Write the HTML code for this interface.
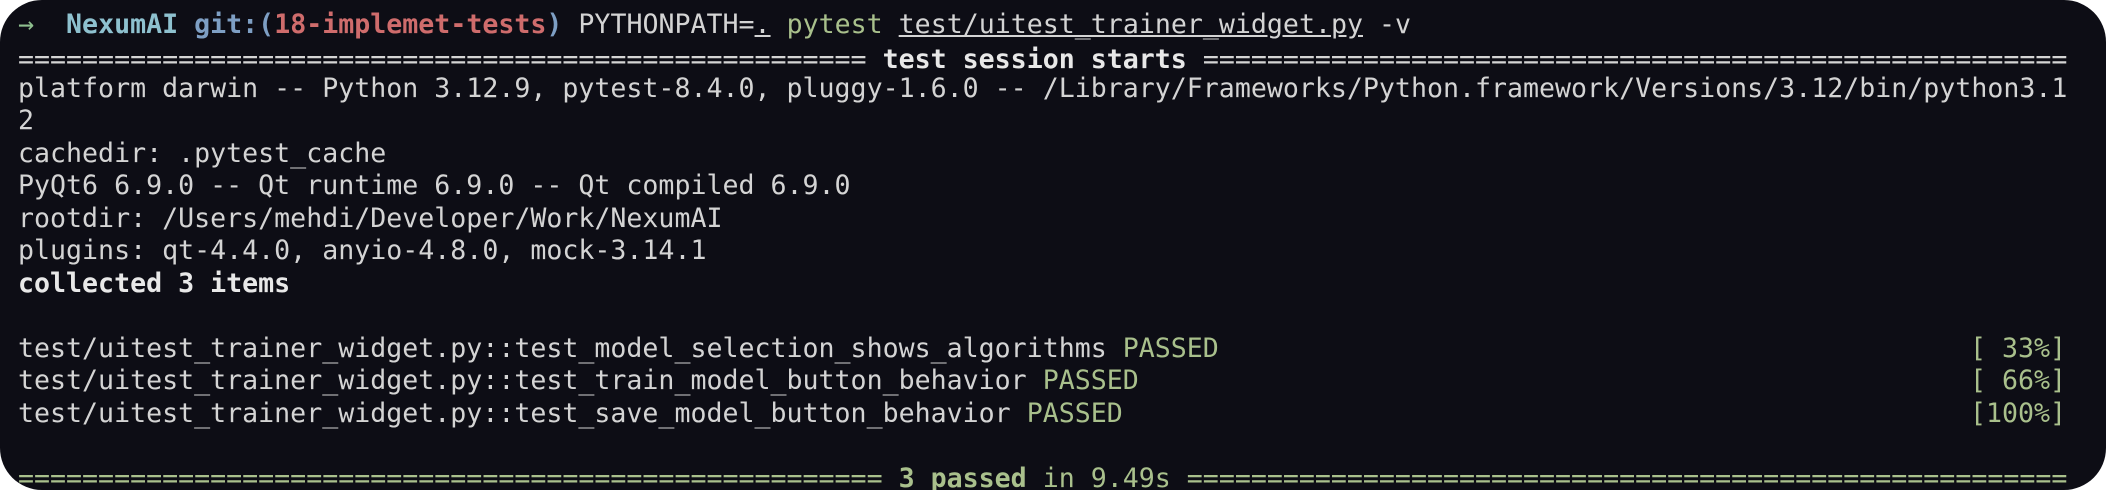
<!DOCTYPE html>
<html><head><meta charset="utf-8">
<style>
html,body{margin:0;padding:0;background:#fff;}
body{width:2106px;height:490px;overflow:hidden;position:relative;}
.term{position:absolute;left:0;top:0;width:2106px;height:490px;background:#0d0d15;border-radius:42px;overflow:hidden;}
.l{position:absolute;left:18px;white-space:pre;font-family:"DejaVu Sans Mono","Liberation Mono",monospace;font-size:26.6px;line-height:32px;height:32px;color:#d4d4d4;}
.g{color:#a9c08c}
.b{font-weight:bold}
.w{color:#e8e8e8;font-weight:bold}
.cy{color:#8ec1cf;font-weight:bold}
.bl{color:#7e9fc4;font-weight:bold}
.rd{color:#cf6c6c;font-weight:bold}
.ar{color:#8fc08f}
.pg{color:#a9c08c}
.u{text-decoration:underline}
</style></head><body>
<div class="term">
<div class="l" style="top:9px"><span class="ar">→</span>  <span class="cy">NexumAI</span> <span class="bl">git:(</span><span class="rd">18-implemet-tests</span><span class="bl">)</span> PYTHONPATH=<span class="u">.</span> <span class="pg">pytest</span> <span class="u">test/uitest_trainer_widget.py</span> -v</div>
<div class="l" style="top:44px">===================================================== <span class="w">test session starts</span> ======================================================</div>
<div class="l" style="top:73px">platform darwin -- Python 3.12.9, pytest-8.4.0, pluggy-1.6.0 -- /Library/Frameworks/Python.framework/Versions/3.12/bin/python3.1</div>
<div class="l" style="top:105px">2</div>
<div class="l" style="top:138px">cachedir: .pytest_cache</div>
<div class="l" style="top:170px">PyQt6 6.9.0 -- Qt runtime 6.9.0 -- Qt compiled 6.9.0</div>
<div class="l" style="top:203px">rootdir: /Users/mehdi/Developer/Work/NexumAI</div>
<div class="l" style="top:235px">plugins: qt-4.4.0, anyio-4.8.0, mock-3.14.1</div>
<div class="l b" style="top:268px;color:#e8e8e8">collected 3 items</div>
<div class="l" style="top:333px">test/uitest_trainer_widget.py::test_model_selection_shows_algorithms <span class="g">PASSED</span></div>
<div class="l g" style="top:333px;left:1970px">[ 33%]</div>
<div class="l" style="top:365px">test/uitest_trainer_widget.py::test_train_model_button_behavior <span class="g">PASSED</span></div>
<div class="l g" style="top:365px;left:1970px">[ 66%]</div>
<div class="l" style="top:398px">test/uitest_trainer_widget.py::test_save_model_button_behavior <span class="g">PASSED</span></div>
<div class="l g" style="top:398px;left:1970px">[100%]</div>
<div class="l g" style="top:463px">====================================================== <span class="b">3 passed</span> in 9.49s =======================================================</div>
</div>
</body></html>
